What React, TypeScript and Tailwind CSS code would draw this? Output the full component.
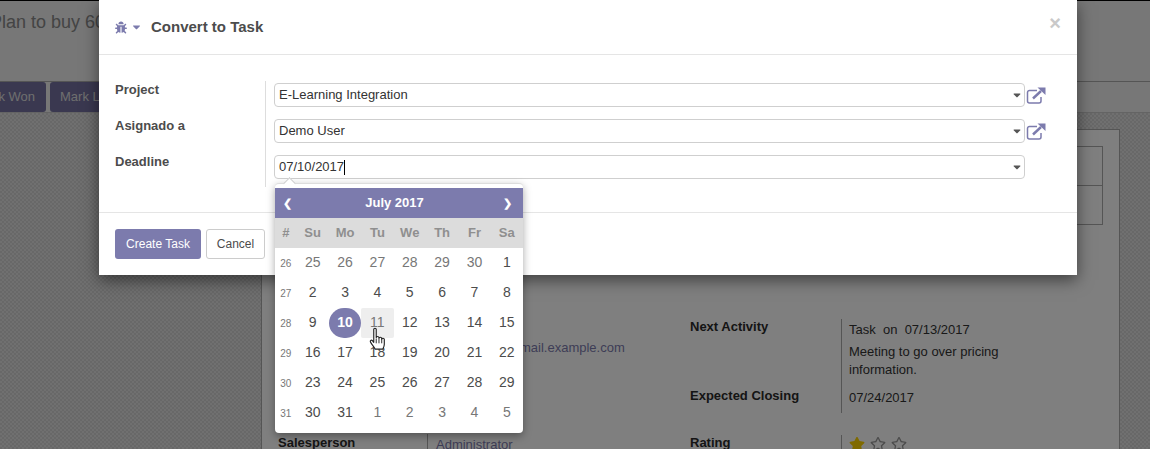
import type { ReactNode } from 'react';
import { FaBug, FaCaretDown, FaRegStar, FaStar } from 'react-icons/fa';

const DOW = ['#', 'Su', 'Mo', 'Tu', 'We', 'Th', 'Fr', 'Sa'];

const WEEKS: { week: number; days: [number, boolean][] }[] = [
  { week: 26, days: [[25, true], [26, true], [27, true], [28, true], [29, true], [30, true], [1, false]] },
  { week: 27, days: [[2, false], [3, false], [4, false], [5, false], [6, false], [7, false], [8, false]] },
  { week: 28, days: [[9, false], [10, false], [11, false], [12, false], [13, false], [14, false], [15, false]] },
  { week: 29, days: [[16, false], [17, false], [18, false], [19, false], [20, false], [21, false], [22, false]] },
  { week: 30, days: [[23, false], [24, false], [25, false], [26, false], [27, false], [28, false], [29, false]] },
  { week: 31, days: [[30, false], [31, false], [1, true], [2, true], [3, true], [4, true], [5, true]] },
];

function ExternalLink() {
  return (
    <svg viewBox="0 0 20 17" className="w-[20px] h-[17px] text-[#7c7bad]" fill="none" stroke="currentColor">
      <path d="M11 3.5H3.5A2 2 0 0 0 1.5 5.5v8.5a2 2 0 0 0 2 2H13a2 2 0 0 0 2-2V10" strokeWidth="1.5" />
      <path d="M7 11.5 15 4" strokeWidth="2.4" />
      <path d="M11.5 0.5h8v7.5z" fill="currentColor" stroke="none" />
    </svg>
  );
}

function Field({ value, cursor, link }: { value: string; cursor?: boolean; link?: boolean }) {
  return (
    <div className="flex items-center h-[24px]">
      <div className="w-[751px] h-[24px] border border-[#cfcfcf] rounded-[4px] flex items-center justify-between pl-[4px] pr-[3px] text-[13px] text-[#333] bg-white">
        <span className="flex items-center">
          {value}
          {cursor && <span className="w-px h-[15px] bg-black" />}
        </span>
        <FaCaretDown className="text-[#555] w-[8px] h-[12px]" />
      </div>
      {link && (
        <span className="ml-[1px]">
          <ExternalLink />
        </span>
      )}
    </div>
  );
}

function SheetRow({ label, children, className }: { label: string; children: ReactNode; className: string }) {
  return (
    <div className={`flex ${className}`}>
      <div className="w-[151px] font-bold text-[13px] leading-[15px] text-[#2b2a2a]">{label}</div>
      <div className="border-l border-[#aaaaaa] pl-[7px] pt-[3px] text-[13px] leading-[15px] text-[#333] w-[180px]">{children}</div>
    </div>
  );
}

function DatePicker() {
  return (
    <div className="absolute left-[275px] top-[183px] w-[248px] h-[250px] bg-white rounded-[4px] pt-[4px] shadow-[0_3px_8px_rgba(0,0,0,0.35)] border-t border-[#ddd]">
      {/* little arrow pointing at the input */}
      <div className="absolute left-[10px] -top-[5px] w-[9px] h-[9px] bg-white rotate-45 border-l border-t border-[#ccc]" />
      <div className="relative h-[30px] bg-[#7c7bad] text-white font-bold text-[13px] flex items-center justify-between pl-[8px] pr-[11px]">
        <span className="text-[11px] leading-none">❮</span>
        <span className="-ml-[6px]">July 2017</span>
        <span className="text-[11px] leading-none">❯</span>
      </div>
      <div className="grid grid-cols-[21.5px_repeat(7,minmax(0,1fr))] h-[30px] bg-[#dcdcdc] items-center text-center font-bold text-[13px] text-[#8f8f8f]">
        {DOW.map(d => (
          <span key={d} className="-mt-[1px]">{d}</span>
        ))}
      </div>
      {WEEKS.map(w => (
        <div key={w.week} className="grid grid-cols-[21.5px_repeat(7,minmax(0,1fr))] h-[30px] items-center text-center text-[14px] text-[#4c4c4c]">
          <span className="text-[10px] leading-[29px] text-[#777]">{w.week}</span>
          {w.days.map(([d, old]) => {
            const active = w.week === 28 && d === 10;
            const hover = w.week === 28 && d === 11;
            return (
              <span
                key={d}
                className={`h-[30px] leading-[29px] ${old ? 'text-[#777]' : ''} ${active ? 'bg-[#7c7bad] text-white font-bold rounded-full' : ''} ${hover ? 'bg-[#eeeeee] rounded-[2px] text-[#777]' : ''}`}
              >
                {d}
              </span>
            );
          })}
        </div>
      ))}
    </div>
  );
}

function HandCursor() {
  return (
    <svg viewBox="0 0 20 26" className="absolute left-[369px] top-[327px] w-[19px] h-[25px]">
      <path
        d="M5 2.2C5 .8 7.6 .8 7.6 2.2V11c.2-1.6 2.7-1.6 2.9 0v.8c.2-1.5 2.7-1.5 2.9 0v.8c.2-1.3 2.6-1.3 2.7.2V18c0 2.4-.8 3.6-1.6 5.2H6.6C5.4 21 3.6 19 1.6 15.8c-.9-1.5.9-2.8 2-1.6L5 16z"
        fill="#fff"
        stroke="#222"
        strokeWidth="1.2"
        strokeLinejoin="round"
      />
      <path d="M7.6 12v5M10.5 12v5M13.4 12v5" stroke="#222" strokeWidth="1" fill="none" />
    </svg>
  );
}

export default function App() {
  return (
    <div className="relative w-[1150px] h-[449px] overflow-hidden bg-[#eeeeee] font-['Liberation_Sans',Arial,sans-serif]">
      {/* Page behind the dialog */}
      <div className="h-[1px] bg-black" />
      <div className="h-[81px] bg-[#eeeeee] border-b border-[#aaaaaa] pt-[11px] -ml-[10px]">
        <div className="text-[18px] text-[#888] whitespace-nowrap leading-[20px]">Plan to buy 60 Computers</div>
      </div>
      <div className="h-[30px] bg-[#eeeeee] flex -ml-[10px] gap-[4px]">
        <div className="w-[56px] h-[30px] bg-[#7471a0] text-[#ddd] text-[13px] whitespace-nowrap flex items-center justify-end pr-[11px] rounded-[3px]">Mark Won</div>
        <div className="w-[70px] h-[30px] bg-[#7471a0] text-[#ddd] text-[13px] whitespace-nowrap flex items-center pl-[10px] rounded-[3px]">Mark Lost</div>
      </div>
      <div className="h-[337px] border-t border-[#c8c8c8] bg-[repeating-conic-gradient(#d0d0d0_0_25%,#e0e0e0_0_50%)] bg-[length:4px_4px] pl-[261px] pt-[16px]">
        <div className="w-[859px] h-[340px] bg-white border border-[#aaaaaa] pt-[16px] pl-[16px]">
          <div className="ml-[408px] w-[417px] h-[79px] border border-[#aaaaaa] border-l-0 flex flex-col">
            <div className="h-[39px] border-b border-[#aaaaaa]" />
          </div>
          <div className="relative">
            <div className="absolute left-[412px] top-[94px]">
              <SheetRow label="Next Activity" className="h-[69px]">
                <div className="pb-[6px]">Task&nbsp; on&nbsp; 07/13/2017</div>
                <div className="leading-[18px]">Meeting to go over pricing information.</div>
              </SheetRow>
              <SheetRow label="Expected Closing" className="h-[25px]">
                <div className="-mt-[1px]">07/24/2017</div>
              </SheetRow>
              <SheetRow label="Rating" className="mt-[22px] h-[30px]">
                <div className="flex gap-[5px] -mt-[2px]">
                  <FaStar className="w-[16px] h-[16px] text-[#ffd400]" />
                  <FaRegStar className="w-[16px] h-[16px] text-[#999]" />
                  <FaRegStar className="w-[16px] h-[16px] text-[#999]" />
                </div>
              </SheetRow>
            </div>
            <div className="absolute left-[242px] top-[115px] text-[13px] leading-[15px] text-[#7c7bad]">mail.example.com</div>
            <div className="absolute left-0 top-[210px] font-bold text-[13px] leading-[15px] text-[#2b2a2a]">Salesperson</div>
            <div className="absolute left-[149px] top-[209px] border-l border-[#aaaaaa] pl-[8px] pt-[3px] text-[13px] leading-[15px] text-[#7c7bad] h-[20px]">Administrator</div>
          </div>
        </div>
      </div>

      {/* Backdrop */}
      <div className="absolute inset-0 bg-black/50" />

      {/* Dialog */}
      <div className="absolute left-[99px] top-0 w-[978px] h-[275px] bg-white shadow-[0_5px_15px_rgba(0,0,0,0.5)] flex flex-col">
        <div className="h-[55px] border-b border-[#e5e5e5] flex items-center pl-[16px] pr-[16px] shrink-0">
          <FaBug className="w-[12px] h-[13px] text-[#7c7bad]" />
          <FaCaretDown className="w-[9px] h-[12px] text-[#7c7bad] ml-[5px]" />
          <span className="ml-[10px] text-[15px] font-bold text-[#4c4c4c]">Convert to Task</span>
          <span className="ml-auto -mt-[9px] text-[#c9c9c9] text-[20px] font-bold leading-none">×</span>
        </div>
        <div className="h-[158px] pt-[26px] pl-[16px] border-b border-[#e5e5e5] shrink-0">
          <div className="flex">
            <div className="w-[150px] flex flex-col gap-[18px] font-bold text-[13px] leading-[18px] text-[#4c4c4c]">
              <div>Project</div>
              <div>Asignado a</div>
              <div>Deadline</div>
            </div>
            <div className="border-l border-[#ddd] pl-[8px] flex flex-col gap-[12px] h-[106px] pt-[2px]">
              <Field value="E-Learning Integration" link />
              <Field value="Demo User" link />
              <Field value="07/10/2017" cursor />
            </div>
          </div>
        </div>
        <div className="flex gap-[5px] pl-[16px] pt-[16px]">
          <button className="w-[86px] h-[30px] bg-[#7c7bad] text-white text-[12px] rounded-[3px]">Create Task</button>
          <button className="w-[59px] h-[30px] bg-white border border-[#ccc] text-[#4c4c4c] text-[12px] rounded-[3px]">Cancel</button>
        </div>
      </div>

      <DatePicker />
      <HandCursor />
    </div>
  );
}
